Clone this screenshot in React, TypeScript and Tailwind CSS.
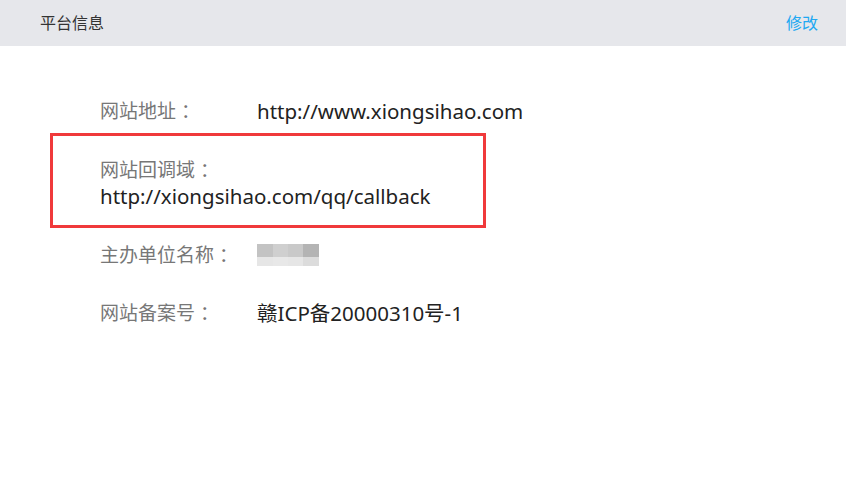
const font = { fontFamily: '"Noto Sans", "Noto Sans CJK SC", sans-serif' };

const Label = ({ text }: { text: string }) => (
  <>
    {text}
    <span className="ml-[5px]">：</span>
  </>
);

const Row = ({ label, children }: { label: string; children: React.ReactNode }) => (
  <div className="flex items-center h-[30px]">
    <span className="w-[157px] shrink-0 text-[19px] text-[#777]">
      <Label text={label} />
    </span>
    <span className="text-[20.5px] text-[#222]">{children}</span>
  </div>
);

const Blurred = () => (
  <div className="flex flex-col">
    <div className="flex h-[13px]">
      <div className="w-[16px] bg-[#c3c3c3]" />
      <div className="w-[15px] bg-[#cfcfcf]" />
      <div className="w-[15px] bg-[#c9c9c9]" />
      <div className="w-[16px] bg-[#b4b4b4]" />
    </div>
    <div className="flex h-[9px]">
      <div className="w-[16px] bg-[#e6e6e6]" />
      <div className="w-[15px] bg-[#e8e8e8]" />
      <div className="w-[15px] bg-[#e6e6e6]" />
      <div className="w-[16px] bg-[#dcdcdc]" />
    </div>
  </div>
);

const App = () => {
  return (
    <div className="w-[846px] h-[503px] bg-white" style={font}>
      <div className="h-[46px] bg-[#e6e7eb] flex items-center justify-between pl-[40px] pr-[28px]">
        <span className="text-[16px] text-[#333]">平台信息</span>
        <span className="text-[16px] text-[#20a8f2]">修改</span>
      </div>
      <div className="pl-[50px] pt-[50px]">
        <div className="pl-[50px]">
          <Row label="网站地址">http://www.xiongsihao.com</Row>
        </div>
        <div className="mt-[7px] w-[436px] h-[95px] border-[3px] border-[#f0393b] pl-[47px] pt-[21px]">
          <div className="text-[19px] text-[#777] leading-[26px]">
            <Label text="网站回调域" />
          </div>
          <div className="text-[20.5px] text-[#222] leading-[26px]">http://xiongsihao.com/qq/callback</div>
        </div>
        <div className="pl-[50px] mt-[12px] flex flex-col gap-[28px]">
          <Row label="主办单位名称">
            <Blurred />
          </Row>
          <Row label="网站备案号">赣ICP备20000310号-1</Row>
        </div>
      </div>
    </div>
  );
};

export default App;
